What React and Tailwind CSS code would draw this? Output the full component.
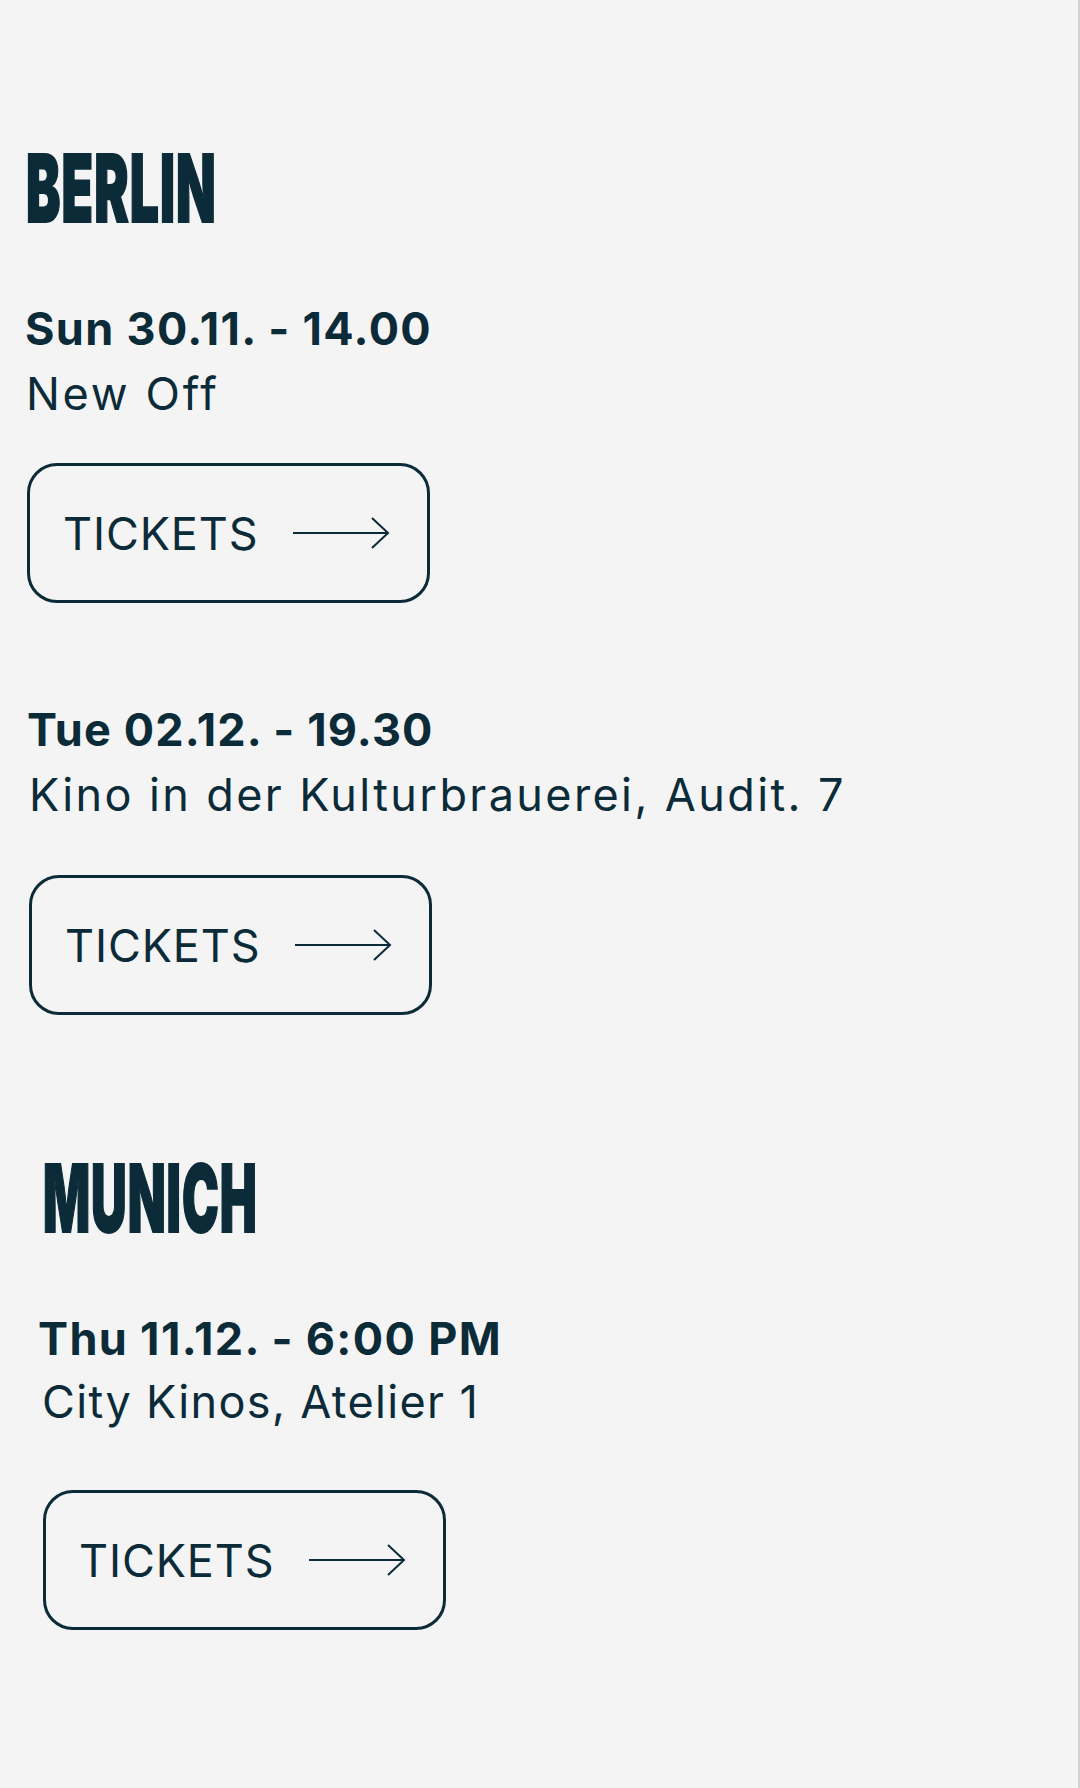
import React from 'react';

const ink = '#0c2b39';

const Arrow = () => (
  <svg width="97" height="32" viewBox="0 0 97 32" fill="none" className="shrink-0">
    <line x1="0" y1="16" x2="95" y2="16" stroke={ink} strokeWidth="2" />
    <polyline points="79,1 95,16 79,31" stroke={ink} strokeWidth="2" fill="none" />
  </svg>
);

const TicketButton = ({ className }) => (
  <a
    href="#"
    className={`flex items-center w-[403px] h-[140px] pl-[33px] gap-[34px] border-[3px] border-[#0c2b39] rounded-[30px] ${className}`}
  >
    <span className="text-[45px] leading-none tracking-[0.02em] font-normal text-[#0c2b39]">TICKETS</span>
    <Arrow />
  </a>
);

const City = ({ name, className }) => (
  <h2
    className={`text-[93px] leading-none font-black uppercase text-[#0c2b39] origin-left [-webkit-text-stroke:2px_#0c2b39] ${className}`}
  >
    {name}
  </h2>
);

export default function App() {
  return (
    <div
      className="w-full min-h-[1788px] bg-[#f4f4f4] border-r-2 border-[#d2d2d2] overflow-hidden"
      style={{ fontFamily: 'Inter, "Open Sans", sans-serif' }}
    >
      <div className="pt-[142px]">
        {/* Berlin */}
        <City name="Berlin" className="ml-[26px] scale-x-[0.555] tracking-[0.02em]" />

        <p className="mt-[71px] ml-[25px] text-[45px] leading-none font-bold tracking-[0.03em] text-[#0c2b39]">
          Sun 30.11. - 14.00
        </p>
        <p className="mt-[20px] ml-[26px] text-[45px] leading-none font-normal tracking-[0.06em] text-[#0c2b39]">
          New Off
        </p>
        <TicketButton className="mt-[47px] ml-[27px]" />

        <p className="mt-[104px] ml-[27px] text-[45px] leading-none font-bold tracking-[0.025em] text-[#0c2b39]">
          Tue 02.12. - 19.30
        </p>
        <p className="mt-[20px] ml-[29px] text-[45px] leading-none font-normal tracking-[0.053em] text-[#0c2b39]">
          Kino in der Kulturbrauerei, Audit. 7
        </p>
        <TicketButton className="mt-[58px] ml-[29px]" />

        {/* Munich */}
        <City name="Munich" className="mt-[137px] ml-[43px] scale-x-[0.53] tracking-[0.02em]" />

        <p className="mt-[71px] ml-[38px] text-[45px] leading-none font-bold tracking-[0.03em] text-[#0c2b39]">
          Thu 11.12. - 6:00 PM
        </p>
        <p className="mt-[18px] ml-[42px] text-[45px] leading-none font-normal tracking-[0.03em] text-[#0c2b39]">
          City Kinos, Atelier 1
        </p>
        <TicketButton className="mt-[66px] ml-[43px]" />
      </div>
    </div>
  );
}
